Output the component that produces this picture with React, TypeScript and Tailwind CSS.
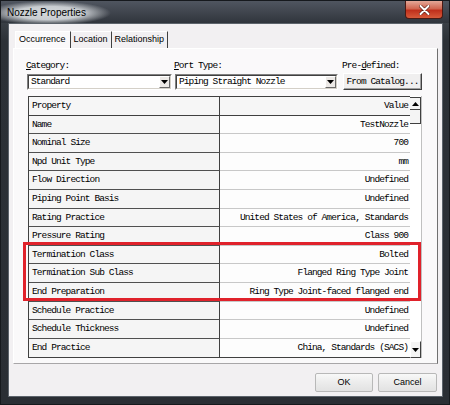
import React from "react";

const mono = "font-['Liberation_Mono',monospace] text-[9.5px] tracking-[-0.9px] leading-none text-black whitespace-nowrap";
const sans = "font-['Liberation_Sans',Arial,sans-serif] text-black whitespace-nowrap";

const rows: [string, string][] = [
  ["Name", "TestNozzle"],
  ["Nominal Size", "700"],
  ["Npd Unit Type", "mm"],
  ["Flow Direction", "Undefined"],
  ["Piping Point Basis", "Undefined"],
  ["Rating Practice", "United States of America, Standards"],
  ["Pressure Rating", "Class 900"],
  ["Termination Class", "Bolted"],
  ["Termination Sub Class", "Flanged Ring Type Joint"],
  ["End Preparation", "Ring Type Joint-faced flanged end"],
  ["Schedule Practice", "Undefined"],
  ["Schedule Thickness", "Undefined"],
  ["End Practice", "China, Standards (SACS)"],
];

function DownTri() {
  return (
    <svg width="7" height="4" viewBox="0 0 7 4">
      <path d="M0 0 H7 L3.5 4 Z" fill="#000" />
    </svg>
  );
}
function UpTri() {
  return (
    <svg width="7" height="4" viewBox="0 0 7 4">
      <path d="M0 4 H7 L3.5 0 Z" fill="#000" />
    </svg>
  );
}

function Combo({ text, w }: { text: string; w: string }) {
  return (
    <div className={`${w} h-[16px] border-t border-l border-[#808080] border-b border-r border-b-white border-r-white`}>
      <div className="h-full flex border-t border-l border-[#404040] border-b border-r border-b-[#d4d0c8] border-r-[#d4d0c8] bg-white">
        <div className={`flex-1 flex items-center pl-[2px] ${mono}`}>{text}</div>
        <div className="w-[11px] h-full flex items-center justify-center bg-[#ece9e6] border-t border-l border-white border-b border-r border-b-[#6a6a6a] border-r-[#6a6a6a]">
          <DownTri />
        </div>
      </div>
    </div>
  );
}

function Tab({ label, selected }: { label: string; selected?: boolean }) {
  return (
    <div
      className={`h-[17px] flex items-center px-[3px] border-r border-r-[#404040] ${selected ? "border-t border-l border-t-white border-l-white bg-[#faf9fa] pr-[4px]" : "border-t border-t-white"} ${sans} text-[9px]`}
    >
      {label}
    </div>
  );
}

export default function App() {
  return (
    <div className="relative w-[450px] h-[405px] overflow-hidden flex flex-col bg-[linear-gradient(to_bottom,#4b5158,#2c3137_40px,#2a2e34)] border border-[#16191d]">
      {/* title bar */}
      <div className="h-[22px] flex items-start justify-between bg-[radial-gradient(ellipse_62px_12px_at_48px_12px,#d4d7da_0%,#c8ccd0_55%,rgba(200,204,208,0)_100%),linear-gradient(to_bottom,#505660,#30353c)]">
        <div className={`${sans} text-[10px] leading-none mt-[7px] ml-[6px]`}>Nozzle Properties</div>
        <div className="mr-[6px] w-[38px] h-[18px] rounded-b-[4px] border border-t-0 border-[#4a1a14] bg-[linear-gradient(to_bottom,#e4a898,#d06650_45%,#c0301c_55%,#d85a3a)] flex items-center justify-center">
          <svg width="11" height="10" viewBox="0 0 11 10">
            <path d="M1.5 1 L9.5 9 M9.5 1 L1.5 9" stroke="#5a1a10" strokeWidth="3.2" strokeLinecap="round" />
            <path d="M1.5 1 L9.5 9 M9.5 1 L1.5 9" stroke="#ffffff" strokeWidth="2" strokeLinecap="round" />
          </svg>
        </div>
      </div>

      {/* client area */}
      <div className="flex-1 ml-[7px] mr-[6px] mb-[7px] border border-[#5c636b] bg-[#f2f0f2] flex flex-col">
        {/* tabs */}
        <div className="pt-[7px] pl-[6px] flex">
          <Tab label="Occurrence" selected />
          <Tab label="Location" />
          <Tab label="Relationship" />
        </div>

        {/* panel */}
        <div className="mx-[4px] h-[316px] border-t border-l border-white border-b border-r border-b-[#a8a6a8] border-r-[#707070] bg-[#faf9fa] pl-[13px] pr-[15px] pt-[11px]">
          {/* labels */}
          <div className={`flex h-[12px] items-center ${mono}`}>
            <div className="w-[148px] -ml-[1px]">
              <span className="underline">C</span>ategory:
            </div>
            <div className="w-[168px]">
              <span className="underline">P</span>ort Type:
            </div>
            <div>
              Pre-<span className="underline">d</span>efined:
            </div>
          </div>
          {/* combos */}
          <div className="flex mt-[2px] h-[16px]">
            <Combo text="Standard" w="w-[145px]" />
            <div className="w-[3px]" />
            <Combo text="Piping Straight Nozzle" w="w-[163px]" />
            <div className="w-[5px]" />
            <div className={`w-[79px] h-[17px] -mt-[1px] flex items-center justify-center bg-[#f0efef] border-t border-l border-white border-b border-r border-b-[#404040] border-r-[#404040] shadow-[inset_-1px_-1px_0_#a0a0a0] ${mono}`}>
              From Catalog...
            </div>
          </div>

          {/* table */}
          <div className="mt-[6px] ml-[1px] w-[394px] flex">
            <div className="w-[382px] border-l border-t border-b border-[#404040]">
              {/* header */}
              <div className="flex h-[18.6px] border-b border-[#404040] bg-[#f6f6f6]">
                <div className={`w-[191px] flex items-center pl-[3px] border-r border-[#404040] ${mono}`}>Property</div>
                <div className={`flex-1 flex items-center justify-end pr-[2px] ${mono}`}>Value</div>
              </div>
              {rows.map(([p, v], i) => (
                <div key={p} className={`flex h-[18.6px] ${i === rows.length - 1 ? "h-[17.5px]" : ""}`}>
                  <div className={`w-[191px] flex items-center pl-[3px] bg-[#f5f5f5] border-r border-[#404040] ${i === rows.length - 1 ? "" : "border-b border-b-[#505050]"} ${mono}`}>{p}</div>
                  <div className={`flex-1 flex items-center justify-end pr-[2px] bg-[#fdfdfd] ${i === rows.length - 1 ? "" : "border-b border-b-[#c8c8c8]"} ${mono}`}>{v}</div>
                </div>
              ))}
            </div>
            {/* scrollbar */}
            <div className="w-[12px] flex flex-col bg-white border-r border-[#c0c0c0]">
              <div className="h-[13px] mt-[1px] flex items-center justify-center border-t border-r border-b border-[#404040] bg-[#f4f4f4]">
                <UpTri />
              </div>
              <div className="h-[14px] border-r border-b border-[#404040] bg-[#f4f4f4]" />
              <div className="flex-1" />
              <div className="h-[17px] flex items-center justify-center border-l border-t border-white border-r border-b border-r-[#404040] border-b-[#404040] bg-[#f4f4f4]">
                <DownTri />
              </div>
            </div>
          </div>
        </div>

        {/* buttons */}
        <div className="mt-[9px] flex justify-end gap-[5px] pr-[5px]">
          <div className={`w-[58px] h-[19px] flex items-center justify-center rounded-[2px] border border-[#b8b8b8] bg-[linear-gradient(to_bottom,#f8f8f8,#ececec_50%,#e2e2e2)] ${sans} text-[9px]`}>OK</div>
          <div className={`w-[59px] h-[19px] flex items-center justify-center rounded-[2px] border border-[#b8b8b8] bg-[linear-gradient(to_bottom,#f8f8f8,#ececec_50%,#e2e2e2)] ${sans} text-[9px]`}>Cancel</div>
        </div>
      </div>

      {/* red annotation */}
      <div className="absolute left-[22px] top-[241px] w-[398px] h-[59px] border-[3px] border-[#e0222b]" />
    </div>
  );
}
